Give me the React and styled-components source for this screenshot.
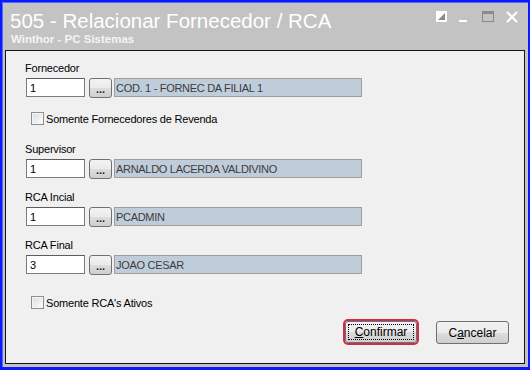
import styled, { createGlobalStyle } from "styled-components"

const Global = createGlobalStyle`
    html, body { margin: 0; padding: 0; background: #ffffff; }
    * { box-sizing: border-box; }
`

const campos = [
    { label: "Fornecedor", codigo: "1", descricao: "COD. 1 - FORNEC DA FILIAL 1", gap: 0 },
    { label: "Supervisor", codigo: "1", descricao: "ARNALDO LACERDA VALDIVINO", gap: 18 },
    { label: "RCA Incial", codigo: "1", descricao: "PCADMIN", gap: 13 },
    { label: "RCA Final", codigo: "3", descricao: "JOAO CESAR", gap: 13 },
]

function Campo({ label, codigo, descricao, gap }) {
    return (
        <Grupo gap={gap}>
            <Rotulo>{label}</Rotulo>
            <Linha>
                <Codigo>{codigo}</Codigo>
                <Reticencias>...</Reticencias>
                <Descricao>{descricao}</Descricao>
            </Linha>
        </Grupo>
    )
}

function Check({ children, gap }) {
    return (
        <CheckLinha gap={gap}>
            <Caixa />
            <span>{children}</span>
        </CheckLinha>
    )
}

export default function App() {
    return (
        <>
            <Global />
            <Janela>
                <Titulo>
                    <div>
                        <h1>505 - Relacionar Fornecedor / RCA</h1>
                        <h2>Winthor - PC Sistemas</h2>
                    </div>
                    <Controles>
                        <svg width="11" height="11" viewBox="0 0 11 11">
                            <rect x="0" y="0" width="11" height="11" fill="#ffffff" />
                            <polygon points="2,9 9,2 9,9" fill="#8a8a8a" />
                        </svg>
                        <svg width="8" height="11" viewBox="0 0 8 11">
                            <rect x="0" y="9" width="8" height="2" fill="#ffffff" />
                        </svg>
                        <svg width="12" height="11" viewBox="0 0 12 11">
                            <rect x="0.5" y="0.5" width="11" height="10" fill="none" stroke="#8a8a8a" />
                            <rect x="0" y="0" width="12" height="3" fill="#8a8a8a" />
                        </svg>
                        <svg width="12" height="12" viewBox="0 0 12 12">
                            <path d="M1 1 L11 11 M11 1 L1 11" stroke="#ffffff" strokeWidth="2.2" />
                        </svg>
                    </Controles>
                </Titulo>
                <Painel>
                    <Campo {...campos[0]} />
                    <Check gap={15}>Somente Fornecedores de Revenda</Check>
                    {campos.slice(1).map((c) => (
                        <Campo key={c.label} {...c} />
                    ))}
                    <Check gap={22}>Somente RCA's Ativos</Check>
                    <Botoes>
                        <Botao foco>
                            <span><u>C</u>onfirmar</span>
                        </Botao>
                        <Botao>
                            <span>C<u>a</u>ncelar</span>
                        </Botao>
                    </Botoes>
                </Painel>
            </Janela>
        </>
    )
}

const Janela = styled.div`
    width: 530px;
    height: 370px;
    display: flex;
    flex-direction: column;
    background: #c3c3c3;
    border: 2px solid #0a1cff;
    border-bottom-width: 3px;
    box-shadow: inset 1px 1px 0 #4f6bff;
    font-family: "Liberation Sans", Arial, sans-serif;
`

const Titulo = styled.div`
    display: flex;
    justify-content: space-between;
    padding: 7px 10px 0 8px;
    height: 48px;
    h1 {
        margin: 0;
        font-size: 20.5px;
        line-height: 23px;
        font-weight: normal;
        color: #ffffff;
    }
    h2 {
        margin: 1px 0 0 1px;
        font-size: 11.5px;
        line-height: 13px;
        font-weight: bold;
        color: #f4f4f4;
    }
`

const Controles = styled.div`
    display: flex;
    align-items: flex-start;
    gap: 12px;
    padding-top: 2px;
    svg:nth-child(3) { margin-left: 3px; }
`

const Painel = styled.div`
    flex: 1;
    margin: 0 3px 3px 3px;
    background: #f0f0f0;
    border: 1px solid #141414;
    padding: 11px 20px 0 20px;
    display: flex;
    flex-direction: column;
    font-size: 11px;
    letter-spacing: -0.2px;
    color: #000000;
`

const Grupo = styled.div`
    margin-top: ${(props) => props.gap}px;
    display: flex;
    flex-direction: column;
    gap: 3px;
`

const Rotulo = styled.div`
    line-height: 13px;
    margin-left: -1px;
`

const Linha = styled.div`
    display: flex;
    align-items: flex-start;
    height: 19px;
`

const Codigo = styled.div`
    width: 59px;
    height: 19px;
    background: #ffffff;
    border: 1px solid #7a7a7a;
    border-top-color: #5c5c5c;
    padding: 2px 0 0 3px;
    line-height: 14px;
`

const Reticencias = styled.div`
    width: 23px;
    height: 20px;
    margin-left: 4px;
    border: 1px solid #707070;
    border-radius: 3px;
    background: linear-gradient(#f3f3f3 0%, #ebebeb 50%, #dddddd 51%, #cfcfcf 100%);
    font-weight: bold;
    text-align: center;
    line-height: 20px;
    font-size: 11px;
    letter-spacing: 0;
    color: #222;
`

const Descricao = styled.div`
    flex: 0 0 248px;
    height: 19px;
    margin-left: 2px;
    background: #bfcddb;
    border: 1px solid #9e9e9e;
    color: #3c3c3c;
    padding: 2px 0 0 1px;
    line-height: 14px;
    letter-spacing: -0.3px;
`

const CheckLinha = styled.div`
    margin-top: ${(props) => props.gap}px;
    display: flex;
    align-items: center;
    height: 13px;
    padding-left: 5px;
    gap: 2px;
`

const Caixa = styled.div`
    width: 13px;
    height: 13px;
    border: 1px solid #8e8f8f;
    background: linear-gradient(135deg, #dcdcdc 0%, #f4f4f4 70%, #ffffff 100%);
    box-shadow: inset 0 0 0 1px #f4f4f4;
`

const Botoes = styled.div`
    display: flex;
    justify-content: flex-end;
    gap: 19px;
    margin-top: 12px;
    margin-right: -5px;
`

const Botao = styled.div`
    width: ${(props) => (props.foco ? "72px" : "73px")};
    height: ${(props) => (props.foco ? "22px" : "23px")};
    padding: 2px;
    border: 1px solid ${(props) => (props.foco ? "#3c7fb1" : "#707070")};
    border-radius: 3px;
    background: linear-gradient(#f2f2f2 0%, #ebebeb 50%, #dddddd 51%, #cfcfcf 100%);
    box-shadow: ${(props) => (props.foco ? "0 0 0 2px #e8262e" : "none")};
    display: flex;
    font-size: 12px;
    letter-spacing: 0;
    span {
        flex: 1;
        display: flex;
        align-items: center;
        justify-content: center;
        white-space: pre;
        border: 1px dotted ${(props) => (props.foco ? "#000" : "transparent")};
    }
`
